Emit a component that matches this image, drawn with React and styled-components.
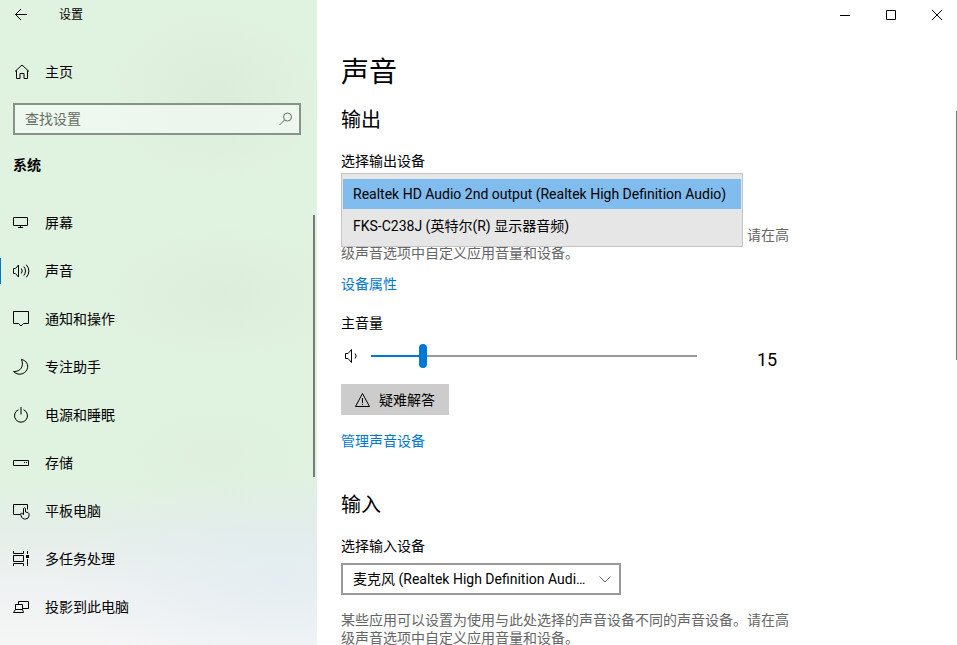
import React, { useState } from 'react';
import styled, { createGlobalStyle } from 'styled-components';

const GlobalStyle = createGlobalStyle`
  * {
    box-sizing: border-box;
  }

  body {
    margin: 0;
    background: #ffffff;
    color: #000000;
    font-family: Roboto, "Noto Sans CJK SC", sans-serif;
    font-size: 14px;
    line-height: 20px;
  }

  button,
  input,
  select {
    font: inherit;
    color: inherit;
    margin: 0;
  }
`;

const Window = styled.div`
  display: flex;
  height: 100vh;
  overflow: hidden;
`;

const Sidebar = styled.aside`
  position: relative;
  display: flex;
  flex-direction: column;
  flex: 0 0 317px;
  background:
    radial-gradient(ellipse 110px 90px at 215px 95px, rgba(215, 228, 210, 0.4), transparent),
    radial-gradient(ellipse 130px 70px at 225px 295px, rgba(215, 230, 212, 0.4), transparent),
    radial-gradient(ellipse 110px 60px at 215px 455px, rgba(214, 230, 212, 0.2), transparent),
    radial-gradient(ellipse 220px 110px at 280px 580px, rgba(222, 234, 241, 0.6), transparent),
    linear-gradient(#e0f2e0 74%, #e4eee8 82%, #eff2f2 91%, #f5f6f6);
`;

const SidebarTitle = styled.header`
  display: flex;
  align-items: center;
  gap: 28px;
  height: 30px;
  padding-left: 13px;
  font-size: 12px;
`;

const IconButton = styled.button`
  display: flex;
  align-items: center;
  justify-content: center;
  width: ${props => props.$width};
  height: 30px;
  padding: 0;
  border: 0;
  background: none;
`;

const NavLink = styled.a`
  display: flex;
  align-items: center;
  gap: 14px;
  height: 48px;
  padding-left: ${props => (props.$active ? '12px' : '13px')};
  border-left: ${props => (props.$active ? '1px solid #0078d7' : '0')};
  border-image: ${props =>
    props.$active
      ? 'linear-gradient(transparent 25%, #0078d7 25% 75%, transparent 75%) 1'
      : 'none'};
  color: #000000;
  text-decoration: none;
`;

const HomeLink = styled(NavLink)`
  margin-top: 18px;
`;

const SearchBox = styled.label`
  display: flex;
  align-items: center;
  height: 32px;
  margin: 7px 16px 0 13px;
  padding: 0 6px 0 10px;
  border: 2px solid #86928a;
  background: rgba(255, 255, 255, 0.45);
  background-clip: padding-box;
`;

const SearchInput = styled.input`
  flex: 1;
  min-width: 0;
  padding: 0;
  border: 0;
  outline: 0;
  background: none;

  &::placeholder {
    color: #666e66;
    opacity: 1;
  }
`;

const Category = styled.h2`
  margin: 20px 13px 24px;
  font-size: 14px;
  font-weight: 700;
  line-height: 20px;
`;

const NavList = styled.ul`
  margin: 0;
  padding: 0;
  list-style: none;
`;

const Icon = styled.svg`
  flex: none;
  fill: none;
  stroke: ${props => props.$color || '#000000'};
  stroke-width: 1;
`;

const ScrollThumb = styled.div`
  position: absolute;
  top: ${props => props.$top};
  right: ${props => props.$right};
  width: ${props => props.$width};
  height: ${props => props.$height};
  background: #7a7a7a;
`;

const Content = styled.div`
  position: relative;
  flex: 1;
  min-width: 0;
`;

const Caption = styled.div`
  display: flex;
  justify-content: flex-end;
  gap: 6px;
`;

const Page = styled.main`
  padding: 23px 24px 0;
`;

const PageTitle = styled.h1`
  margin: 0;
  font-size: 28px;
  font-weight: 400;
  line-height: 40px;
`;

const Section = styled.section`
  margin-bottom: 39px;
`;

const SectionTitle = styled.h2`
  margin: 12px 0 16px;
  font-size: 20px;
  font-weight: 400;
  line-height: 30px;
`;

const Label = styled.label`
  display: block;
`;

const Field = styled.div`
  position: relative;
  display: flex;
  align-items: center;
  width: 280px;
  margin: 7px 0 16px;
`;

const Select = styled.select`
  appearance: none;
  width: 100%;
  height: 32px;
  padding: 0 32px 0 10px;
  border: 2px solid #999999;
  border-radius: 0;
  background: #ffffff;
  text-overflow: ellipsis;
`;

const SelectArrow = styled(Icon)`
  position: absolute;
  right: 10px;
  pointer-events: none;
`;

const Popup = styled.div`
  position: absolute;
  top: -5px;
  left: 0;
  display: flex;
  flex-direction: column;
  gap: 2px;
  min-width: 402px;
  padding: 5px 1px;
  border: 1px solid #c4c4c4;
  background: #e6e6e6;
`;

const PopupItem = styled.button`
  height: 30px;
  padding: 0 10px;
  border: 0;
  background: ${props => (props.$selected ? '#80bdee' : 'transparent')};
  text-align: left;
  white-space: nowrap;
`;

const Hint = styled.p`
  max-width: 450px;
  margin: 0;
  color: #666666;
  line-height: 18px;
`;

const Link = styled.a`
  display: table;
  color: #0078d7;
  text-decoration: none;
`;

const DeviceLink = styled(Link)`
  margin: 12px 0 19px;
`;

const VolumeRow = styled.div`
  display: flex;
  align-items: center;
  height: 24px;
  margin: 11px 0 16px;
`;

const Slider = styled.input`
  appearance: none;
  width: 326px;
  height: 24px;
  margin: 0 60px 0 12px;
  background: linear-gradient(
      to right,
      #0078d7 ${props => props.value}%,
      #999999 ${props => props.value}%
    )
    center / 100% 2px no-repeat;

  &::-webkit-slider-thumb {
    appearance: none;
    width: 8px;
    height: 24px;
    border-radius: 4px;
    background: #0078d7;
  }
`;

const VolumeValue = styled.output`
  padding-top: 8px;
  font-size: 18px;
  line-height: 24px;
`;

const ActionButton = styled.button`
  display: flex;
  align-items: center;
  gap: 8px;
  height: 31px;
  margin-bottom: 16px;
  padding: 0 14px 0 13px;
  border: 0;
  background: #cccccc;
`;

const navItems = [
  {
    name: '屏幕',
    icon: <path d="M0.5 3.5h14v8h-14zM7.5 11.5v2M5 13.5h5" />
  },
  {
    name: '声音',
    active: true,
    icon: (
      <path d="M0.5 6.5h2l3-3.5v12l-3-3.5h-2zM8.3 6.5q1.8 2.5 0 5M10.8 4.5q3.4 4.5 0 9M13.3 2.7q5.2 6.3 0 12.6" />
    )
  },
  {
    name: '通知和操作',
    icon: <path d="M0.5 1.5h15v12h-5l-2.5 2.5-2.5-2.5h-5z" />
  },
  {
    name: '专注助手',
    icon: (
      <path d="M8.5 1.5c5 1 7.5 5.5 5.6 9.8c-2.3 5.4-9.6 6.6-13.6 2.2c7 .6 10.8-5.5 8-12z" />
    )
  },
  {
    name: '电源和睡眠',
    icon: <path d="M8 1v7.5M5.5 3.7a6.5 6.5 0 1 0 5 0" />
  },
  {
    name: '存储',
    icon: <path d="M0.5 6.5h15v5h-15zM11 8.5h1M13 8.5h1" />
  },
  {
    name: '平板电脑',
    icon: (
      <path d="M7 12.5h-6.5v-10h14v5M7.5 12l1-1 2 1.5V6.5q1-1.5 2 0V10l2.5.5q1 .5 1 2v1.5q-.5 3-3.5 3h-1q-2 0-3-2z" />
    )
  },
  {
    name: '多任务处理',
    icon: (
      <>
        <path d="M0.5 1v2.5h10V1M0.5 5.5h10v6H0.5zM0.5 16v-2.5h10V16M14.5 1v3M14.5 9V16" />
        <path d="M13 5h3v3h-3z" fill="#000000" stroke="none" />
      </>
    )
  },
  {
    name: '投影到此电脑',
    icon: (
      <path d="M5.5 6.5v-3h10v7h-6M2.5 6.5h7v5h-7zM2.5 11.5l-2 3h10l-1-3" />
    )
  }
];

const outputDevices = [
  'Realtek HD Audio 2nd output (Realtek High Definition Audio)',
  'FKS-C238J (英特尔(R) 显示器音频)'
];

const hint =
  '某些应用可以设置为使用与此处选择的声音设备不同的声音设备。请在高级声音选项中自定义应用音量和设备。';

export default function App() {
  const [output, setOutput] = useState(outputDevices[0]);
  const [volume, setVolume] = useState(15);
  const [search, setSearch] = useState('');

  return (
    <>
      <GlobalStyle />
      <Window>
        <Sidebar>
          <SidebarTitle>
            <IconButton type="button" aria-label="返回" $width="18px">
              <Icon width="18" height="18">
                <path d="M2.5 8.5H14M8 3L2.5 8.5L8 14" />
              </Icon>
            </IconButton>
            <span>设置</span>
          </SidebarTitle>
          <HomeLink href="#home">
            <Icon width="18" height="18">
              <path d="M2 8.5L9 2l7 6.5M3.5 7.5v8h3.5v-5h4v5h3.5v-8" />
            </Icon>
            主页
          </HomeLink>
          <SearchBox>
            <SearchInput
              type="text"
              aria-label="查找设置"
              placeholder="查找设置"
              value={search}
              onChange={event => setSearch(event.target.value)}
            />
            <Icon width="14" height="14" $color="#666e66">
              <circle cx="8.5" cy="5" r="4" />
              <path d="M5.5 8L0.5 13" />
            </Icon>
          </SearchBox>
          <Category>系统</Category>
          <nav>
            <NavList>
              {navItems.map(item => (
                <li key={item.name}>
                  <NavLink href="#" $active={item.active}>
                    <Icon width="18" height="18">
                      {item.icon}
                    </Icon>
                    {item.name}
                  </NavLink>
                </li>
              ))}
            </NavList>
          </nav>
          <ScrollThumb $top="215px" $right="2px" $width="2px" $height="262px" />
        </Sidebar>

        <Content>
          <Caption>
            <IconButton type="button" aria-label="最小化" $width="40px">
              <Icon width="12" height="12">
                <path d="M1 6.5h10" />
              </Icon>
            </IconButton>
            <IconButton type="button" aria-label="最大化" $width="40px">
              <Icon width="12" height="12">
                <path d="M1.5 1.5h9v9h-9z" />
              </Icon>
            </IconButton>
            <IconButton type="button" aria-label="关闭" $width="40px">
              <Icon width="12" height="12">
                <path d="M1 1l10 10M11 1L1 11" />
              </Icon>
            </IconButton>
          </Caption>

          <Page>
            <PageTitle>声音</PageTitle>
            <Section>
              <SectionTitle>输出</SectionTitle>
              <Label htmlFor="output">选择输出设备</Label>
              <Field>
                <Select
                  id="output"
                  value={output}
                  onChange={event => setOutput(event.target.value)}>
                  {outputDevices.map(device => (
                    <option key={device}>{device}</option>
                  ))}
                </Select>
                <Popup role="listbox">
                  {outputDevices.map(device => (
                    <PopupItem
                      key={device}
                      type="button"
                      role="option"
                      aria-selected={device === output}
                      $selected={device === output}
                      onClick={() => setOutput(device)}>
                      {device}
                    </PopupItem>
                  ))}
                </Popup>
              </Field>
              <Hint>{hint}</Hint>
              <DeviceLink href="#properties">设备属性</DeviceLink>
              <Label htmlFor="volume">主音量</Label>
              <VolumeRow>
                <Icon width="18" height="18">
                  <path d="M4.5 6.5h2.5l3.5-4v13l-3.5-4h-2.5zM14 6.5q2.5 2.5 0 5" />
                </Icon>
                <Slider
                  id="volume"
                  type="range"
                  min="0"
                  max="100"
                  value={volume}
                  onChange={event => setVolume(event.target.value)}
                />
                <VolumeValue htmlFor="volume">{volume}</VolumeValue>
              </VolumeRow>
              <ActionButton type="button">
                <Icon width="17" height="16">
                  <path d="M8.5 1.5L15.5 14.5H1.5zM8.5 6v5M8.5 12v1" />
                </Icon>
                疑难解答
              </ActionButton>
              <Link href="#manage">管理声音设备</Link>
            </Section>

            <Section>
              <SectionTitle>输入</SectionTitle>
              <Label htmlFor="input">选择输入设备</Label>
              <Field>
                <Select id="input">
                  <option>麦克风 (Realtek High Definition Audio)</option>
                </Select>
                <SelectArrow width="12" height="12" $color="#666666">
                  <path d="M0.5 3.5L6 9l5.5-5.5" />
                </SelectArrow>
              </Field>
              <Hint>{hint}</Hint>
            </Section>
          </Page>
          <ScrollThumb $top="111px" $right="0" $width="1px" $height="249px" />
        </Content>
      </Window>
    </>
  );
}
